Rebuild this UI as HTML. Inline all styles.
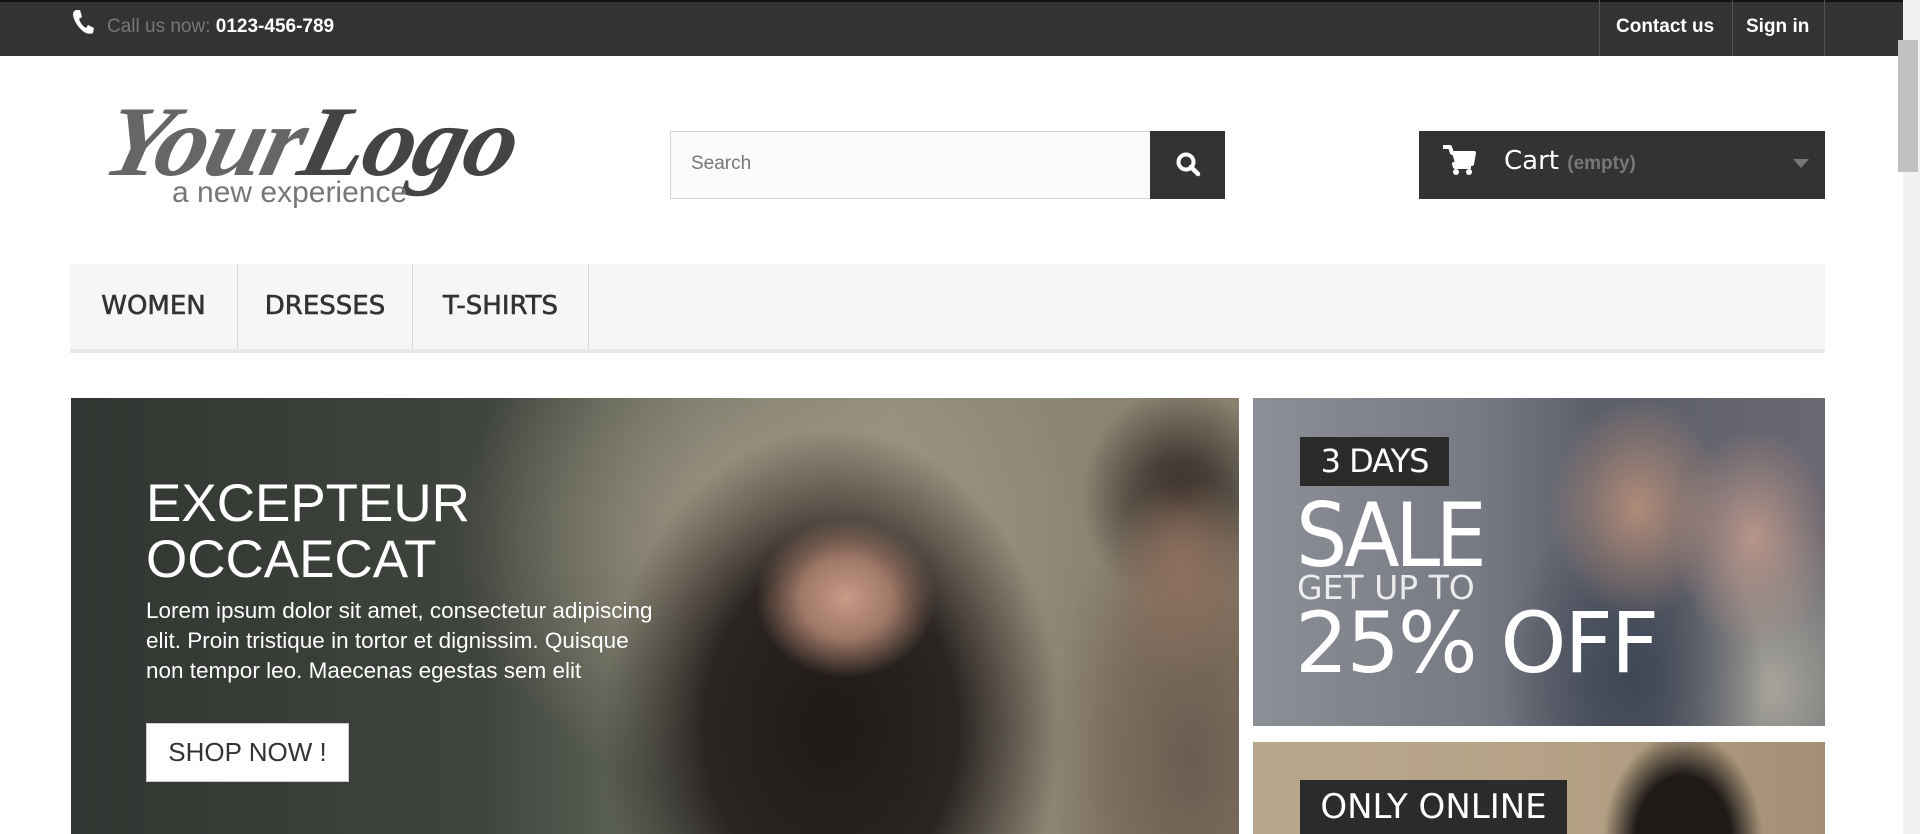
<!DOCTYPE html>
<html><head><meta charset="utf-8"><style>
*{margin:0;padding:0;box-sizing:border-box}
body{width:1920px;height:834px;overflow:hidden;background:#fff;font-family:"Liberation Sans",Arial,sans-serif;position:relative}
.a{position:absolute}
.top{left:0;top:0;width:1903px;height:56px;background:#333;border-top:2px solid #111}
.sb{left:1903px;top:0;width:17px;height:834px;background:#f1f1f1}
.nav a{color:#fff;font-weight:bold;font-size:19px}
.menu{left:70px;top:264px;width:1755px;height:89px;background:#f6f6f6;border-bottom:4px solid #e9e9e9}
.mi{position:absolute;top:0;height:85px;border-right:1px solid #d6d4d4;font-family:"DejaVu Sans",sans-serif;font-weight:normal;font-size:26px;color:#333;line-height:85px;text-align:center;-webkit-text-stroke:0.6px #333}
.ban{left:71px;top:398px;width:1168px;height:436px;overflow:hidden;
background:
radial-gradient(ellipse 90px 80px at 775px 200px,#c79b85 0%,#a07867 50%,rgba(0,0,0,0) 100%),
radial-gradient(ellipse 70px 110px at 1110px 170px,#8e6f5e 0%,rgba(0,0,0,0) 100%),
radial-gradient(ellipse 230px 300px at 760px 330px,#1e1a18 0%,#2a2522 55%,rgba(0,0,0,0) 100%),
radial-gradient(ellipse 140px 280px at 1120px 360px,#6a5d50 0%,#7c6c5c 55%,rgba(0,0,0,0) 100%),
radial-gradient(ellipse 100px 110px at 1110px 100px,#1d1a18 0%,rgba(0,0,0,0) 100%),
radial-gradient(ellipse 320px 260px at 700px 140px,#a49a86 0%,rgba(0,0,0,0) 100%),
linear-gradient(90deg,#323632 0%,#3f443d 35%,#6d7164 55%,#8e8b79 70%,#8a806e 100%)}
.b2{left:1253px;top:398px;width:572px;height:328px;overflow:hidden;
background:
radial-gradient(ellipse 90px 110px at 385px 110px,#b08a78 0%,rgba(0,0,0,0) 100%),
radial-gradient(ellipse 80px 110px at 500px 140px,#b8958a 0%,rgba(0,0,0,0) 100%),
radial-gradient(ellipse 130px 180px at 380px 280px,#3e4654 0%,rgba(0,0,0,0) 100%),
radial-gradient(ellipse 120px 170px at 520px 290px,#a6a49a 0%,rgba(0,0,0,0) 100%),
linear-gradient(90deg,#8c8f96 0%,#777983 40%,#5b5f69 60%,#6a6870 100%)}
.b3{left:1253px;top:742px;width:572px;height:92px;overflow:hidden;background:linear-gradient(90deg,#b9a78c 0%,#b5a285 55%,#a48f74 100%)}
.w{color:#fff}
</style></head><body>
<div class="a top"></div>
<svg class="a" style="left:71px;top:9px" width="24" height="26" viewBox="0 0 24 26"><path d="M5 1 L9 1 L11 8 L8 10 Q10 16 15 19 L17 16 L23 19 L22 24 Q18 26 13 23 Q4 16 2 6 Q2 2 5 1Z" fill="#fff"/></svg>
<div class="a" style="left:107px;top:16px;font-size:19px;color:#777">Call us now: <b style="color:#fff">0123-456-789</b></div>
<div class="a" style="left:1599px;top:0;width:1px;height:56px;background:#515151"></div>
<div class="a" style="left:1732px;top:0;width:1px;height:56px;background:#515151"></div>
<div class="a" style="left:1824px;top:0;width:1px;height:56px;background:#515151"></div>
<div class="a nav" style="left:1616px;top:16px"><a>Contact us</a></div>
<div class="a nav" style="left:1746px;top:16px"><a>Sign in</a></div>
<div class="a sb"></div><div class="a" style="left:1898px;top:40px;width:20px;height:132px;background:#c1c1c1"></div>

<div class="a" style="left:122px;top:84px;font-family:'Liberation Serif',serif;font-style:italic;font-weight:bold;font-size:100px;color:#666;letter-spacing:-2px;transform:skewX(-14deg) scaleX(1.05);transform-origin:left top">Your<span style="color:#444">Logo</span></div>
<div class="a" style="left:172px;top:176px;font-size:30px;color:#777">a new experience</div>

<div class="a" style="left:670px;top:131px;width:481px;height:68px;background:#fbfbfb;border:1px solid #d6d4d4"></div>
<div class="a" style="left:691px;top:153px;font-size:19px;color:#777">Search</div>
<div class="a" style="left:1150px;top:131px;width:75px;height:68px;background:#333"></div>
<svg class="a" style="left:1175px;top:151px" width="26" height="26" viewBox="0 0 26 26"><circle cx="11" cy="11" r="7.5" stroke="#fff" stroke-width="4" fill="none"/><path d="M16 16 L23 23" stroke="#fff" stroke-width="4.5" stroke-linecap="round"/></svg>

<div class="a" style="left:1419px;top:131px;width:406px;height:68px;background:#333"></div>
<svg class="a" style="left:1442px;top:144px" width="34" height="32" viewBox="0 0 34 32"><path d="M1 3 H8 L10 9 H32 L30 20 H12 L13 23 H29" stroke="#fff" stroke-width="4" fill="none" stroke-linejoin="round"/><path d="M10 9 H31 L29 19 H13Z" fill="#fff"/><circle cx="14" cy="28" r="3" fill="#fff"/><circle cx="27" cy="28" r="3" fill="#fff"/></svg>
<div class="a" style="left:1504px;top:146px;font-family:'DejaVu Sans',sans-serif;font-size:26px;color:#fff">Cart <span style="font-family:'Liberation Sans';font-weight:bold;font-size:19px;color:#777">(empty)</span></div>
<div class="a" style="left:1793px;top:159px;width:0;height:0;border-left:8px solid transparent;border-right:8px solid transparent;border-top:9px solid #777"></div>

<div class="a menu">
<div class="mi" style="left:0;width:168px">WOMEN</div>
<div class="mi" style="left:168px;width:175px">DRESSES</div>
<div class="mi" style="left:343px;width:176px">T-SHIRTS</div>
</div>

<div class="a ban">
<div class="a w" style="left:75px;top:78px;font-size:53px;line-height:56px">EXCEPTEUR<br>OCCAECAT</div>
<div class="a w" style="left:75px;top:198px;font-size:22.5px;line-height:30px;width:525px">Lorem ipsum dolor sit amet, consectetur adipiscing elit. Proin tristique in tortor et dignissim. Quisque non tempor leo. Maecenas egestas sem elit</div>
<div class="a" style="left:75px;top:325px;width:203px;height:59px;background:#fff;border:1px solid #ccc;font-size:26px;color:#333;line-height:57px;text-align:center">SHOP NOW !</div>
</div>

<div class="a b2">
<div class="a w" style="left:47px;top:39px;width:149px;height:49px;background:#2b2b2b;font-family:'DejaVu Sans',sans-serif;font-size:32px;line-height:49px;text-align:center;letter-spacing:-1px">3 DAYS</div>
<div class="a w" style="left:43px;top:88px;font-family:'DejaVu Sans',sans-serif;font-size:88px;line-height:100px;letter-spacing:-5px;transform:scaleX(0.92);transform-origin:left">SALE</div>
<div class="a w" style="left:44px;top:170px;font-family:'DejaVu Sans',sans-serif;font-size:33px;line-height:40px;opacity:.85">GET UP TO</div>
<div class="a w" style="left:42px;top:200px;font-family:'DejaVu Sans',sans-serif;font-size:84px;line-height:90px;letter-spacing:-2px">25% OFF</div>
</div>
<div class="a b3">
<div class="a" style="left:340px;top:0;width:180px;height:92px;background:radial-gradient(ellipse 80px 110px at 90px 100px,#1e1a18 60%,rgba(0,0,0,0) 100%)"></div>
<div class="a w" style="left:47px;top:38px;width:267px;height:54px;background:#2b2b2b;font-family:'DejaVu Sans',sans-serif;font-size:34px;line-height:54px;text-align:center">ONLY ONLINE</div>
</div>
</body></html>
